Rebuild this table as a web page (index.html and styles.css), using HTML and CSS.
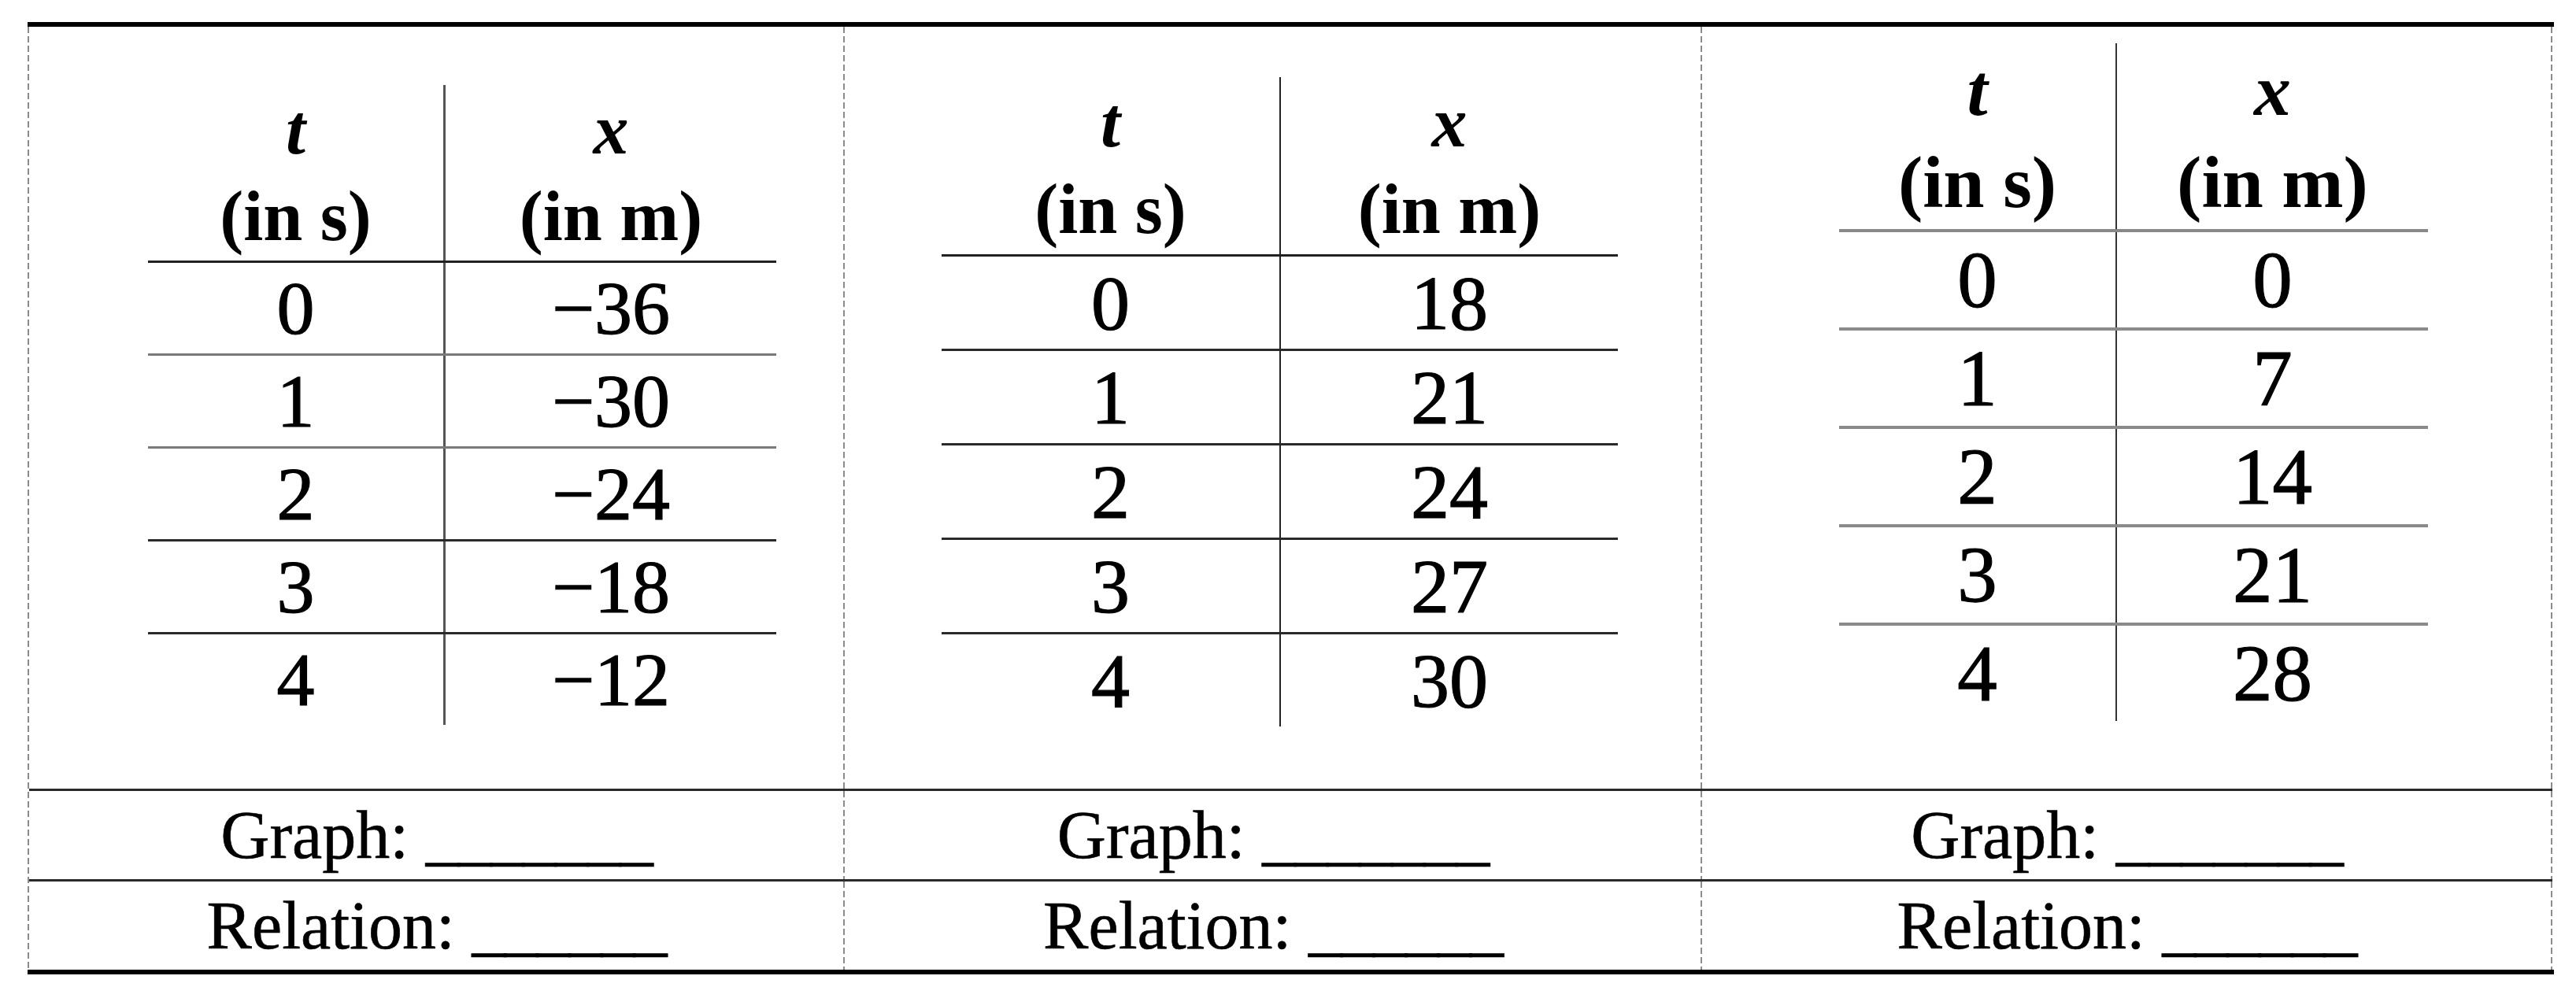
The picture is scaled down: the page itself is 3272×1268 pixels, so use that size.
FILE: index.html
```html
<!DOCTYPE html>
<html lang="en">
<head>
    <meta charset="UTF-8">
    <title>Position and time tables</title>
    <link rel="stylesheet" href="styles.css">
</head>
<body>
    <div class="sheet">
        <div class="cell pic">
            <table class="data d1">
                <tr><th><i>t</i><br>(in s)</th><th><i>x</i><br>(in m)</th></tr>
                <tr class="soft"><td>0</td><td>−36</td></tr>
                <tr class="soft"><td>1</td><td>−30</td></tr>
                <tr><td>2</td><td>−24</td></tr>
                <tr><td>3</td><td>−18</td></tr>
                <tr><td>4</td><td>−12</td></tr>
            </table>
        </div>
        <div class="cell pic">
            <table class="data d2">
                <tr><th><i>t</i><br>(in s)</th><th><i>x</i><br>(in m)</th></tr>
                <tr><td>0</td><td>18</td></tr>
                <tr><td>1</td><td>21</td></tr>
                <tr><td>2</td><td>24</td></tr>
                <tr><td>3</td><td>27</td></tr>
                <tr><td>4</td><td>30</td></tr>
            </table>
        </div>
        <div class="cell pic">
            <table class="data d3">
                <tr><th><i>t</i><br>(in s)</th><th><i>x</i><br>(in m)</th></tr>
                <tr><td>0</td><td>0</td></tr>
                <tr><td>1</td><td>7</td></tr>
                <tr><td>2</td><td>14</td></tr>
                <tr><td>3</td><td>21</td></tr>
                <tr><td>4</td><td>28</td></tr>
            </table>
        </div>

        <div class="cell answer">Graph: <span class="blank">_______</span></div>
        <div class="cell answer">Graph: <span class="blank">_______</span></div>
        <div class="cell answer">Graph: <span class="blank">_______</span></div>

        <div class="cell answer">Relation: <span class="blank">______</span></div>
        <div class="cell answer">Relation: <span class="blank">______</span></div>
        <div class="cell answer">Relation: <span class="blank">______</span></div>
    </div>
</body>
</html>
```

FILE: styles.css
```css
body {
    margin: 0;
    background: #fff;
    color: #000;
    font-family: "Liberation Serif", serif;
}

/* outer sheet: solid rules top/bottom, dashed column edges */
.sheet {
    margin: 28px 0 0 35px;
    padding-left: 2px;
    width: 3207px;
    display: grid;
    grid-template-columns: 1036px 1089px 1080px;
    grid-template-rows: 968px 115px 115px;
    border-top: 6px solid #000;
    border-bottom: 6px solid #000;
    background: repeating-linear-gradient(to bottom, #8c8c8c 0 8px, transparent 8px 12px) left top / 2px 100% no-repeat;
}

.cell {
    box-sizing: border-box;
    padding-right: 2px;
    background: repeating-linear-gradient(to bottom, #8c8c8c 0 8px, transparent 8px 12px) right top / 2px 100% no-repeat;
}

.pic {
    overflow: hidden;
}

.answer {
    border-top: 3px solid #2a2a2a;
    display: flex;
    align-items: center;
    justify-content: center;
    font-size: 86px;
    white-space: pre;
    -webkit-text-stroke: 0.6px #000;
}

.blank {
    letter-spacing: -2px;
}

/* the small t / x tables */
.data {
    border-collapse: collapse;
    font-family: "Liberation Serif", serif;
}

.data th {
    padding: 0;
    font-size: 90px;
    line-height: 110px;
    font-weight: bold;
    vertical-align: middle;
    border-bottom: 3px solid #222;
}

.data td {
    padding: 0;
    text-align: center;
    font-size: 96px;
    border-bottom: 3px solid #2a2a2a;
    -webkit-text-stroke: 1.2px #000;
}

.data tr:last-child td {
    border-bottom: none;
}

.data th:first-child,
.data td:first-child {
    border-right: 3px solid #555;
}

.data tr.soft td {
    border-bottom-color: #7a7a7a;
}

.d1 {
    margin: 74px 0 0 151px;
    width: 798px;
}

.d1 th { height: 223px; }
.d1 th:first-child { width: 375px; }
.d1 td { height: 115px; }

.d2 {
    margin: 64px 0 0 123px;
    width: 859px;
}

.d2 th { height: 225px; }
.d2 th:first-child { width: 429px; }
.d2 td { height: 117px; font-size: 98px; }
.d2 th:first-child,
.d2 td:first-child { border-right: 2px solid #222; }

.d3 {
    margin: 21px 0 0 174px;
    width: 748px;
}

.d3 th {
    height: 236px;
    font-size: 94px;
    line-height: 117px;
    border-bottom: 4px solid #888;
}
.d3 th:first-child { width: 351px; }
.d3 td {
    height: 121px;
    font-size: 101px;
    border-bottom: 4px solid #8a8a8a;
}
.d3 th:first-child,
.d3 td:first-child { border-right: 2px solid #333; }
```
